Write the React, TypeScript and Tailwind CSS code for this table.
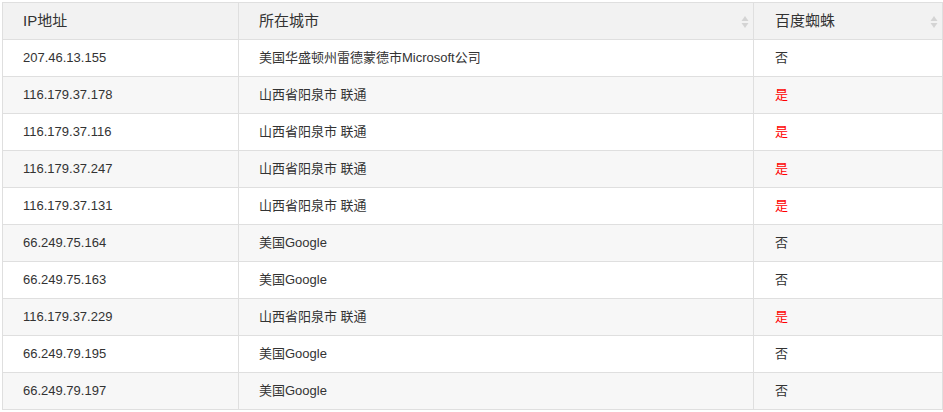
import React from "react";

const rows: [string, string, boolean][] = [
  ["207.46.13.155", "美国华盛顿州雷德蒙德市Microsoft公司", false],
  ["116.179.37.178", "山西省阳泉市 联通", true],
  ["116.179.37.116", "山西省阳泉市 联通", true],
  ["116.179.37.247", "山西省阳泉市 联通", true],
  ["116.179.37.131", "山西省阳泉市 联通", true],
  ["66.249.75.164", "美国Google", false],
  ["66.249.75.163", "美国Google", false],
  ["116.179.37.229", "山西省阳泉市 联通", true],
  ["66.249.79.195", "美国Google", false],
  ["66.249.79.197", "美国Google", false],
];

function SortIcon() {
  return (
    <svg width="8" height="14" viewBox="0 0 8 14" className="absolute right-[4px] top-[12px]">
      <path d="M4 1 L7.5 6 L0.5 6 Z" fill="#d4d4d4" />
      <path d="M4 13 L7.5 8 L0.5 8 Z" fill="#d4d4d4" />
    </svg>
  );
}

export default function App() {
  return (
    <div className="bg-white w-[943px] h-[412px] pt-[2px] pl-[2px]" style={{ fontFamily: '"Liberation Sans", Arial, "Noto Sans CJK SC", sans-serif' }}>
      <table className="w-[940px] border-collapse table-fixed text-[#333]">
        <colgroup>
          <col className="w-[236px]" />
          <col className="w-[515px]" />
          <col className="w-[189px]" />
        </colgroup>
        <thead>
          <tr className="bg-[#f2f2f2] h-[37px]">
            <th className="border border-[#dfdfdf] text-left font-normal text-[15px] pl-[20px] relative">IP地址</th>
            <th className="border border-[#dfdfdf] text-left font-normal text-[15px] pl-[20px] relative">
              所在城市
              <SortIcon />
            </th>
            <th className="border border-[#dfdfdf] text-left font-normal text-[15px] pl-[21px] relative">
              百度蜘蛛
              <SortIcon />
            </th>
          </tr>
        </thead>
        <tbody>
          {rows.map(([ip, city, yes], i) => (
            <tr key={i} className={`h-[37px] ${i % 2 === 1 ? "bg-[#f7f7f7]" : "bg-white"}`}>
              <td className="border border-[#dfdfdf] text-[13px] pl-[20px]">{ip}</td>
              <td className="border border-[#dfdfdf] text-[13px] pl-[20px]">{city}</td>
              <td className={`border border-[#dfdfdf] text-[13px] pl-[21px] ${yes ? "text-[#ff0000]" : ""}`}>{yes ? "是" : "否"}</td>
            </tr>
          ))}
        </tbody>
      </table>
    </div>
  );
}
